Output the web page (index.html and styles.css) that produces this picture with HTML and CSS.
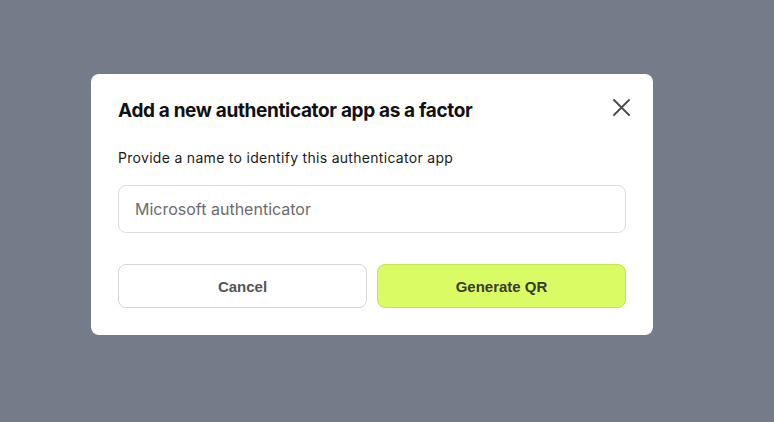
FILE: index.html
```html
<!DOCTYPE html>
<html>
<head>
<meta charset="utf-8">
<link rel="stylesheet" href="styles.css">
</head>
<body>
<div class="overlay">
  <div class="modal">
    <div class="header">
      <h2 class="title">Add a new authenticator app as a factor</h2>
      <button class="close" aria-label="Close">
        <svg width="17" height="17" viewBox="0 0 17 17"><path d="M1 1L16 16M16 1L1 16" stroke="#4a4a4a" stroke-width="1.8" stroke-linecap="round"/></svg>
      </button>
    </div>
    <label class="label">Provide a name to identify this authenticator app</label>
    <input class="input" type="text" placeholder="Microsoft authenticator">
    <div class="actions">
      <button class="btn btn-cancel">Cancel</button>
      <button class="btn btn-primary">Generate QR</button>
    </div>
  </div>
</div>
</body>
</html>
```
FILE: styles.css
```css
html, body { margin: 0; padding: 0; }
body {
  background: #747b89;
  width: 774px;
  height: 422px;
  font-family: Inter, "Noto Sans", sans-serif;
}
.overlay {
  padding-top: 74px;
  padding-left: 91px;
}
.modal {
  width: 562px;
  box-sizing: border-box;
  background: #fff;
  border-radius: 8px;
  padding: 24px 27px 27px 27px;
  display: flex;
  flex-direction: column;
}
.header {
  display: flex;
  justify-content: space-between;
  align-items: center;
  height: 24px;
}
.title {
  margin: 0;
  font-size: 19px;
  font-weight: 700;
  color: #111;
  letter-spacing: -0.35px;
}
.close {
  border: 0;
  background: none;
  padding: 0;
  width: 17px;
  height: 17px;
  margin-right: -4px;
  margin-top: -6px;
  cursor: pointer;
}
.close svg { display: block; }
.label {
  margin-top: 26px;
  font-size: 14px;
  color: #1a1a1a;
  line-height: 20px;
  letter-spacing: 0.3px;
}
.input {
  margin-top: 17px;
  height: 48px;
  box-sizing: border-box;
  border: 1px solid #dcdcdc;
  border-radius: 8px;
  padding: 0 16px;
  font-family: inherit;
  font-size: 16px;
  color: #222;
  outline: none;
}
.input::placeholder { color: #6b6b6b; }
.actions {
  margin-top: 31px;
  display: grid;
  grid-template-columns: 1fr 1fr;
  gap: 10px;
}
.btn {
  height: 44px;
  border-radius: 8px;
  font-family: "Liberation Sans", Arial, sans-serif;
  font-weight: 700;
  font-size: 15px;
  cursor: pointer;
}
.btn-cancel {
  background: #fff;
  border: 1px solid #d6d6d6;
  color: #555;
}
.btn-primary {
  background: #d9fc65;
  border: 1px solid #c3e35a;
  color: #3b3b2b;
}
```
